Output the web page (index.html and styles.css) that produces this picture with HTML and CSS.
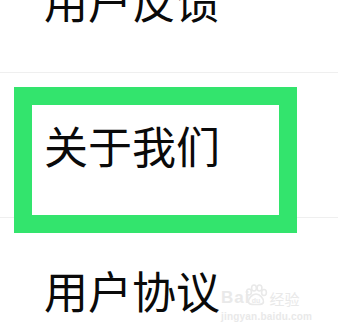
FILE: index.html
```html
<!DOCTYPE html>
<html lang="zh">
<head>
<meta charset="utf-8">
<link rel="stylesheet" href="styles.css">
</head>
<body>
<div class="page">
  <ul class="menu">
    <li class="row">用户反馈</li>
    <li class="row">关于我们</li>
    <li class="row">用户协议</li>
  </ul>
  <div class="highlight"></div>
  <div class="watermark">
    <div class="wm-top">
      <span class="wm-bai">Bai</span>
      <svg class="wm-paw" width="24" height="22" viewBox="0 0 24 22">
        <g fill="none" stroke="#e9e9e9" stroke-width="1.6">
          <ellipse cx="5" cy="8" rx="2.4" ry="3"/>
          <ellipse cx="10" cy="4" rx="2.4" ry="3"/>
          <ellipse cx="15.5" cy="4" rx="2.4" ry="3"/>
          <ellipse cx="20" cy="8.5" rx="2.4" ry="3"/>
          <path d="M12 10 C8 10 4 15 4.5 18 C5 21 9 20.5 12 20.5 C15 20.5 19 21 19.5 18 C20 15 16 10 12 10 Z"/>
        </g>
        <text x="12" y="19" font-size="7" font-family="Liberation Sans, sans-serif" font-weight="bold" fill="#e9e9e9" text-anchor="middle">du</text>
      </svg>
      <span class="wm-jy">经验</span>
    </div>
    <div class="wm-url">jingyan.baidu.com</div>
  </div>
</div>
</body>
</html>
```
FILE: styles.css
```css
html, body {
  margin: 0;
  padding: 0;
  background: #ffffff;
}
.page {
  position: relative;
  width: 338px;
  height: 336px;
  overflow: hidden;
}
.menu {
  list-style: none;
  margin: -72px 0 0 0;
  padding: 0;
}
.row {
  height: 144px;
  display: flex;
  align-items: center;
  padding-left: 44px;
  border-bottom: 1px solid #efefef;
  font-family: "Noto Sans CJK SC", "Noto Sans", sans-serif;
  font-size: 44px;
  color: #0a0a0a;
  line-height: 1;
}
.highlight {
  position: absolute;
  left: 14px;
  top: 87px;
  width: 247px;
  height: 110px;
  border: 18px solid #33e46d;
}
.watermark {
  position: absolute;
  left: 221px;
  top: 282px;
  color: #e9e9e9;
  font-family: "Liberation Sans", sans-serif;
}
.wm-top {
  display: flex;
  align-items: flex-end;
  height: 24px;
}
.wm-bai {
  font-size: 17px;
  font-weight: bold;
  line-height: 1;
  letter-spacing: 1px;
}
.wm-paw {
  margin-left: -6px;
}
.wm-jy {
  font-family: "Noto Sans CJK SC", sans-serif;
  font-size: 15px;
  line-height: 1;
  margin-left: 1px;
}
.wm-url {
  font-size: 10px;
  font-weight: bold;
  margin-top: 5px;
  letter-spacing: 0.2px;
}
```
